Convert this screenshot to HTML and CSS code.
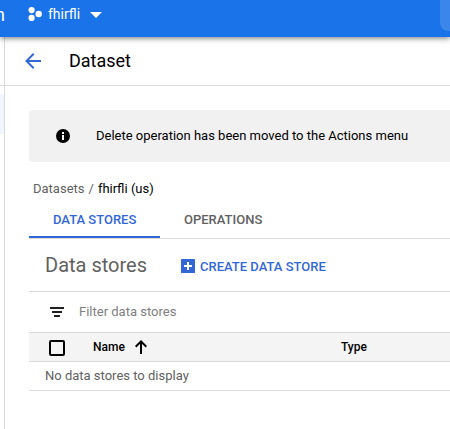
FILE: index.html
```html
<!DOCTYPE html>
<html lang="en">
<head>
<meta charset="utf-8">
<title>Dataset</title>
<link rel="stylesheet" href="styles.css">
</head>
<body>
<header class="topbar">
  <span class="brand">n</span>
  <svg class="project-icon" width="14" height="14" viewBox="0 0 14 14" fill="#fff"><circle cx="3.6" cy="3.1" r="3.1"/><circle cx="10.7" cy="7" r="3.2"/><circle cx="3.6" cy="10.9" r="3.1"/></svg>
  <span class="project">fhirfli</span>
  <svg class="caret" width="12" height="6" viewBox="0 0 12 6"><path d="M0 0h12L6 6z" fill="#fff"/></svg>
  <div class="search"></div>
</header>
<div class="body">
  <nav class="side"><div class="side-head"></div><div class="side-active"></div></nav>
  <main>
    <div class="titlebar">
      <svg width="16" height="16" viewBox="0 0 16 16" fill="none" stroke="#3367d6" stroke-width="2"><path d="M16 8H2M8.7 .8L1.5 8l7.2 7.2"/></svg>
      <h1>Dataset</h1>
    </div>
    <div class="content">
      <div class="banner">
        <svg width="14" height="14" viewBox="0 0 14 14"><circle cx="7" cy="7" r="7" fill="#000"/><path d="M6 3h2v2H6zM6 6h2v5H6z" fill="#fff"/></svg>
        <span>Delete operation has been moved to the Actions menu</span>
      </div>
      <div class="crumbs"><span>Datasets</span><span class="slash">/</span><span class="current">fhirfli (us)</span></div>
      <div class="tabs"><div class="tab active">DATA STORES</div><div class="tab">OPERATIONS</div></div>
      <div class="toolbar">
        <h2>Data stores</h2>
        <svg class="plus" width="14" height="14" viewBox="0 0 14 14"><rect width="14" height="14" rx=".6" fill="#3367d6"/><path d="M7 3v8M3 7h8" stroke="#fff" stroke-width="2"/></svg>
        <span class="create">CREATE DATA STORE</span>
      </div>
      <div class="filter">
        <svg width="14" height="10" viewBox="0 0 14 10" fill="#212121"><path d="M0 0h14v2H0zM2 4h10v2H2zM4 8h6v2H4z"/></svg>
        <span>Filter data stores</span>
      </div>
      <div class="thead">
        <div class="checkbox"></div>
        <span class="name">Name</span>
        <svg width="12" height="14" viewBox="0 0 12 14" fill="none" stroke="#000" stroke-width="2"><path d="M6 14V2M.7 6.7L6 1.4l5.3 5.3"/></svg>
        <span class="type">Type</span>
      </div>
      <div class="empty">No data stores to display</div>
    </div>
  </main>
</div>
</body>
</html>
```
FILE: styles.css
```css
* { box-sizing: border-box; }
body { margin: 0; height: 429px; overflow: hidden; background: #fff; font: 13px/20px Roboto, "Liberation Sans", sans-serif; color: #000; }
svg { display: block; flex: none; }
h1, h2 { margin: 0; font-weight: 400; }
span { white-space: nowrap; }
.topbar { position: relative; z-index: 1; display: flex; height: 37px; padding-top: 4px; background: #1a73e8; color: #fff; box-shadow: 0 1px 6px rgba(0,0,0,.55); }
.brand { width: 28px; padding-top: 1px; font-size: 18px; text-indent: -5px; }
.project-icon { margin-top: 3px; }
.project { width: 42px; margin-left: 6px; font-size: 14px; }
.caret { margin-top: 8px; }
.search { width: 10px; height: 31px; margin: -4px 0 0 auto; background: #3b86ea; border-radius: 0 0 0 8px; }
.body { display: flex; height: 392px; }
.side { flex: none; width: 5px; border-right: 1px solid #dadada; }
.side-head { height: 49px; border-bottom: 1px solid #dadada; }
.side-active { height: 40px; margin-top: 8px; background: #f0f5ff; }
main { flex: 1; min-width: 0; }
.titlebar { display: flex; align-items: center; height: 49px; padding-left: 20px; border-bottom: 1px solid #dadada; }
.titlebar h1 { margin-left: 28px; font-size: 18px; line-height: 24px; }
.content { padding: 24px 0 0 24px; }
.banner { display: flex; align-items: center; height: 52px; padding-left: 27px; background: #f1f1f1; border-radius: 4px 0 0 4px; }
.banner span { margin-left: 26px; }
.crumbs { display: flex; height: 38px; padding: 17px 0 0 4px; color: #616161; }
.slash { margin: 0 4px; }
.current { color: #000; }
.tabs { display: flex; height: 39px; border-bottom: 1px solid #dadada; font-weight: 500; color: #616161; }
.tab { height: 38px; padding: 10px 24px 0; white-space: nowrap; }
.tab.active { width: 131px; color: #3367d6; border-bottom: 2px solid #3367d6; }
.toolbar { display: flex; align-items: center; height: 53px; padding-left: 16px; border-bottom: 1px solid #dadada; }
.toolbar h2 { width: 136px; font-size: 20px; line-height: 24px; color: #616161; }
.plus { margin-top: 2px; }
.create { margin: 3px 0 0 5px; font-weight: 500; color: #3367d6; }
.filter { display: flex; align-items: center; height: 41px; padding-left: 21px; border-bottom: 1px solid #dadada; color: #808080; }
.filter span { margin-left: 15px; }
.thead { display: flex; align-items: center; height: 29px; padding-left: 20px; background: #f4f4f4; border-bottom: 1px solid #dadada; font-size: 12px; font-weight: 500; }
.checkbox { width: 16px; height: 16px; margin-top: 2px; border: 2px solid #000; border-radius: 2px; }
.name { width: 42px; margin-left: 28px; }
.type { margin-left: 194px; }
.empty { height: 29px; padding: 4px 0 0 16px; border-bottom: 1px solid #dadada; color: #616161; }
```
